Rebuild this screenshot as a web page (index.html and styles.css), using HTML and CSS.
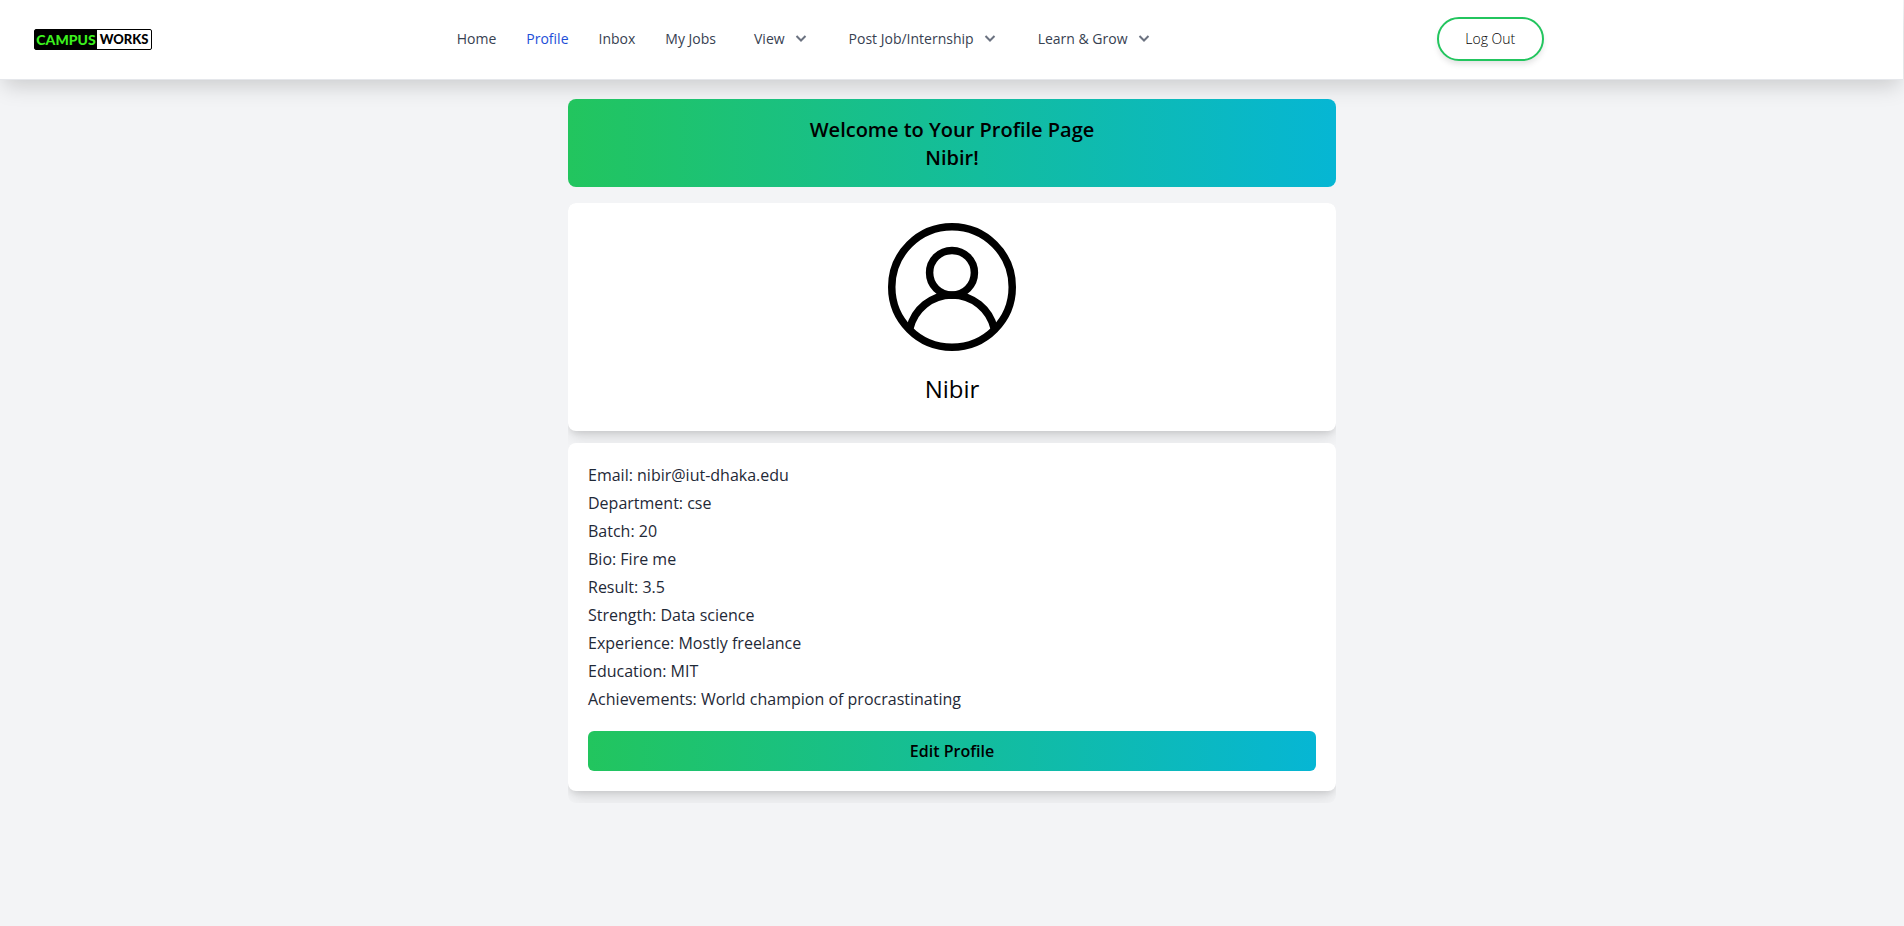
FILE: index.html
```html
<!DOCTYPE html>
<html lang="en">
<head>
<meta charset="utf-8">
<meta name="viewport" content="width=device-width, initial-scale=1">
<title>Campus Works – Profile</title>
<link rel="stylesheet" href="styles.css">
</head>
<body>
<header class="site-header">
  <a class="logo" href="#"><span class="logo-campus">CAMPUS</span><span class="logo-works">WORKS</span></a>
  <nav class="nav">
    <a class="nav-link" href="#">Home</a>
    <a class="nav-link active" href="#">Profile</a>
    <a class="nav-link" href="#">Inbox</a>
    <a class="nav-link" href="#">My Jobs</a>
    <button class="nav-menu" type="button">View <svg class="chevron" viewBox="0 0 20 20" aria-hidden="true"><path d="M5.500 7 10 11.500l4.500-4.500"/></svg></button>
    <button class="nav-menu" type="button">Post Job/Internship <svg class="chevron" viewBox="0 0 20 20" aria-hidden="true"><path d="M5.500 7 10 11.500l4.500-4.500"/></svg></button>
    <button class="nav-menu" type="button">Learn &amp; Grow <svg class="chevron" viewBox="0 0 20 20" aria-hidden="true"><path d="M5.500 7 10 11.500l4.500-4.500"/></svg></button>
  </nav>
  <button class="logout" type="button">Log Out</button>
</header>
<main class="page">
  <h1 class="banner">Welcome to Your Profile Page<br>Nibir!</h1>
  <div class="cards">
    <section class="card identity">
      <svg class="avatar" viewBox="0 0 128 128" aria-hidden="true">
        <circle cx="64" cy="64" r="60.250"/>
        <circle cx="64" cy="49.800" r="22.400"/>
        <path d="M21.700 106A43.300 43.300 0 0 1 106.300 106"/>
      </svg>
      <h2 class="name">Nibir</h2>
    </section>
    <section class="card">
      <p class="detail">Email: nibir@iut-dhaka.edu</p>
      <p class="detail">Department: cse</p>
      <p class="detail">Batch: 20</p>
      <p class="detail">Bio: Fire me</p>
      <p class="detail">Result: 3.5</p>
      <p class="detail">Strength: Data science</p>
      <p class="detail">Experience: Mostly freelance</p>
      <p class="detail">Education: MIT</p>
      <p class="detail">Achievements: World champion of procrastinating</p>
      <button class="edit" type="button">Edit Profile</button>
    </section>
  </div>
</main>
</body>
</html>
```
FILE: styles.css
```css
* { box-sizing: border-box; margin: 0; }
body {
  min-height: 100vh;
  background: #f3f4f6;
  color: #000;
  font: 16px/24px "Segoe UI", "Open Sans", "Noto Sans", sans-serif;
}
a { color: inherit; text-decoration: none; }
button { font: inherit; color: inherit; border: 0; background: none; padding: 0; cursor: pointer; }

.site-header {
  display: grid;
  grid-template-columns: 48fr 103fr 49fr;
  align-items: center;
  min-height: 80px;
  margin-right: 1px;
  padding-bottom: 1px;
  background: #fff;
  border-bottom: 1px solid #e5e7eb;
  box-shadow: 0 10px 20px -4px rgba(0, 0, 0, 0.17);
}
.logo {
  display: flex;
  justify-self: start;
  width: 118px;
  height: 21px;
  margin-left: 34px;
  border: 1px solid #000;
  border-radius: 2px;
  font: 900 14px/19px Lato, sans-serif;
}
.logo-campus { flex: 0 0 62px; background: #000; color: #3cf01e; text-align: center; }
.logo-works { flex: 1; color: #000; text-align: center; font-size: 13px; }

.nav {
  display: flex;
  align-items: center;
  gap: 30px;
  font-size: 14px;
  line-height: 20px;
  font-weight: 500;
  color: #374151;
  white-space: nowrap;
}
.active { color: #1d4ed8; }
.nav-menu { display: flex; align-items: center; gap: 6px; padding-left: 8px; }
.chevron { width: 20px; height: 20px; fill: none; stroke: #6b7280; stroke-width: 2; }
.logout {
  justify-self: start;
  width: 107px;
  height: 44px;
  border: 2px solid #22c55e;
  border-radius: 22px;
  font-size: 14px;
  font-weight: 300;
  background: #fff;
  box-shadow: 0 4px 6px -1px rgba(0, 0, 0, 0.12);
}

.page { position: relative; max-width: 768px; margin: 0 auto; padding-top: 19px; }
.banner {
  margin-bottom: 16px;
  padding: 17px 16px 15px;
  border-radius: 8px;
  background: linear-gradient(to right, #22c55e, #06b6d4);
  font-size: 20px;
  line-height: 28px;
  font-weight: 600;
  text-align: center;
}
.cards { overflow: hidden; border-radius: 8px; }
.card {
  margin-bottom: 12px;
  padding: 20px;
  border-radius: 8px;
  background: #fff;
  box-shadow: 0 10px 15px -3px rgba(0, 0, 0, 0.1), 0 4px 6px -2px rgba(0, 0, 0, 0.1);
}
.identity { padding-bottom: 26px; text-align: center; }
.avatar { display: block; width: 128px; height: 128px; margin: 0 auto 22px; fill: none; stroke: #000; stroke-width: 7.500; }
.name { font-size: 24px; line-height: 32px; font-weight: 500; }
.detail { margin-bottom: 4px; font-weight: 500; color: #1f2937; }
.edit {
  display: block;
  width: 100%;
  margin-top: 20px;
  padding: 8px 16px;
  border-radius: 6px;
  background: linear-gradient(to right, #22c55e, #06b6d4);
  font-weight: 600;
}
```
